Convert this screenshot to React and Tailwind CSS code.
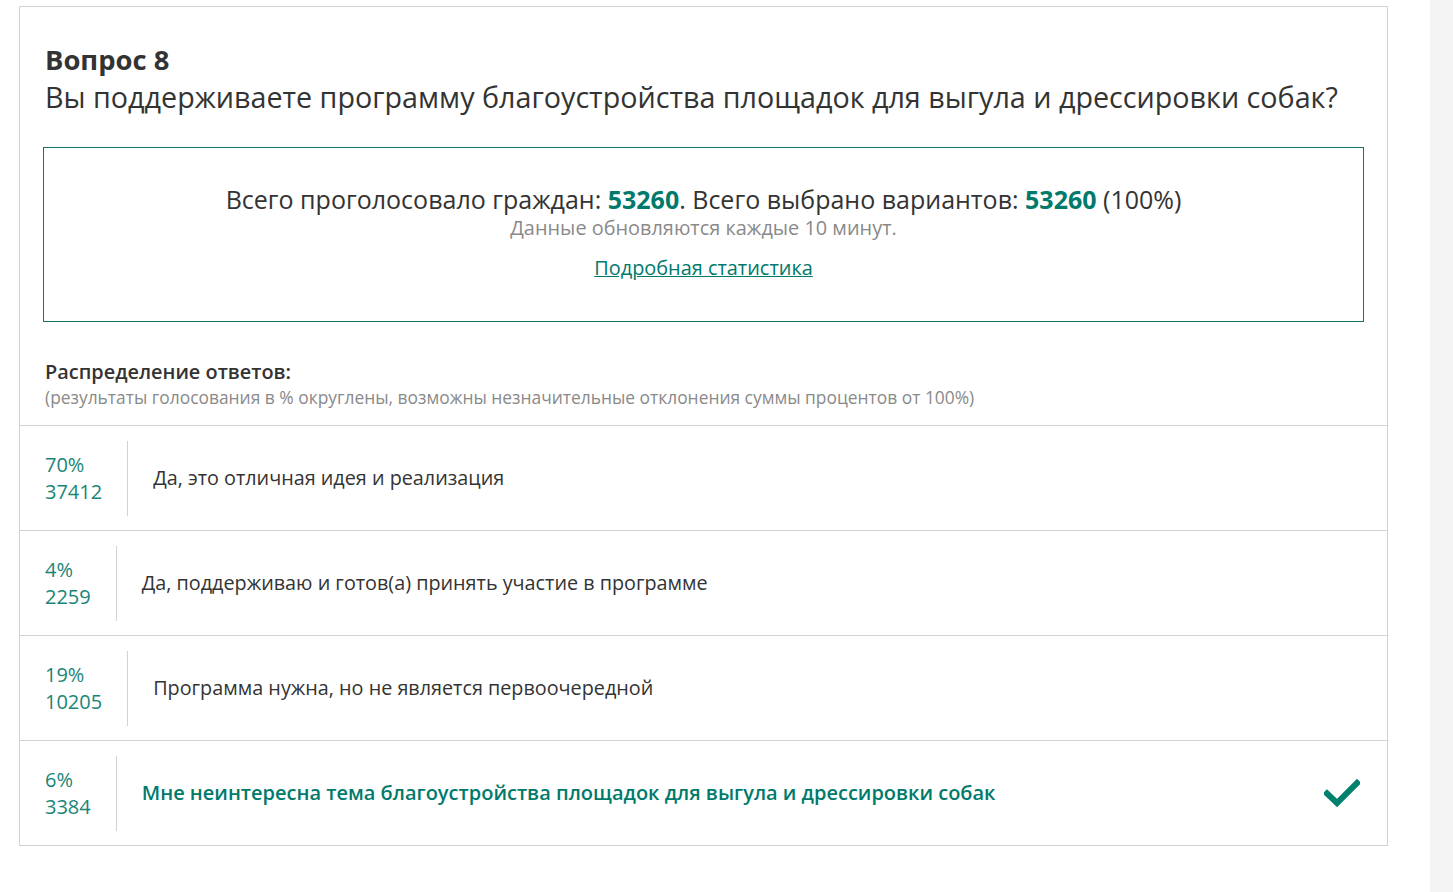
export default function App() {
  const rows = [
    { pct: "70%", count: "37412", text: "Да, это отличная идея и реализация" },
    { pct: "4%", count: "2259", text: "Да, поддерживаю и готов(а) принять участие в программе" },
    { pct: "19%", count: "10205", text: "Программа нужна, но не является первоочередной" },
    {
      pct: "6%",
      count: "3384",
      text: "Мне неинтересна тема благоустройства площадок для выгула и дрессировки собак",
      chosen: true,
    },
  ];

  return (
    <div
      className="flex min-h-[892px] bg-white text-[#333333]"
      style={{ fontFamily: '"Open Sans", "Noto Sans", sans-serif' }}
    >
      <div className="w-[1430px] pl-[19px] pt-[6px] pr-[42px]">
        <div className="border border-[#d2d2d2] bg-white">
          <div className="px-[25px] pt-[34px]">
            <h2 className="text-[27.4px] font-bold leading-[37px]">Вопрос 8</h2>
            <p className="text-[28.7px] leading-[37px]">
              Вы поддерживаете программу благоустройства площадок для выгула и дрессировки собак?
            </p>
          </div>

          <div className="mx-[23px] mt-[32px] flex h-[175px] flex-col items-center border border-[#0f7565] pt-[35px]">
            <p className="text-[25px] leading-[32px]">
              Всего проголосовало граждан: <b className="font-bold text-[#007a6b]">53260</b>. Всего выбрано
              вариантов: <b className="font-bold text-[#007a6b]">53260</b> (100%)
            </p>
            <p className="text-[19.9px] leading-[26px] text-[#8a8a8a]">Данные обновляются каждые 10 минут.</p>
            <a href="#" className="mt-[14px] text-[19.9px] leading-[26px] text-[#007a6b] underline">
              Подробная статистика
            </a>
          </div>

          <div className="px-[25px] pt-[37px] pb-[16px]">
            <p className="text-[19.9px] font-semibold leading-[26px]">Распределение ответов:</p>
            <p className="text-[17.4px] leading-[24px] text-[#8a8a8a]">
              (результаты голосования в % округлены, возможны незначительные отклонения суммы процентов от 100%)
            </p>
          </div>

          {rows.map((r) => (
            <div key={r.count} className="flex h-[105px] items-center border-t border-[#d2d2d2]">
              <div className="flex h-[75px] flex-col justify-center border-r border-[#d2d2d2] pl-[25px] pr-[25px] text-[20px] leading-[27px] text-[#1a8576]">
                <span>{r.pct}</span>
                <span>{r.count}</span>
              </div>
              <div
                className={
                  "flex-1 pl-[25px] leading-[28px] " +
                  (r.chosen ? "text-[20px] font-semibold text-[#007a6b]" : "text-[19.8px] text-[#333333]")
                }
              >
                {r.text}
              </div>
              {r.chosen && (
                <svg className="mr-[27px] h-[28px] w-[36px]" viewBox="0 0 36 28">
                  <path
                    d="M3 14.5 L13 24 L33 4"
                    fill="none"
                    stroke="#00806f"
                    strokeWidth="6"
                    strokeLinecap="square"
                    strokeLinejoin="miter"
                  />
                </svg>
              )}
            </div>
          ))}
        </div>
      </div>
      <div className="flex-1 bg-[#f4f4f4]" />
    </div>
  );
}
